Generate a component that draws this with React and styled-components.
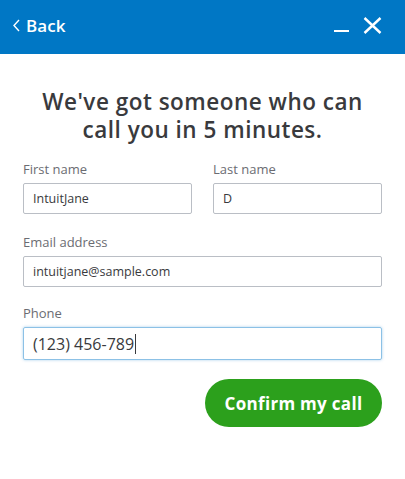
import React from 'react';
import styled, { createGlobalStyle } from 'styled-components';

const GlobalStyle = createGlobalStyle`
    body {
        margin: 0;
        background: #ffffff;
        font-family: 'Open Sans', 'Liberation Sans', sans-serif;
    }
`

const Page = styled.div`
    width: 405px;
    height: 479px;
    display: flex;
    flex-direction: column;
    background: #ffffff;
`

const Header = styled.div`
    height: 54px;
    background: #0077c5;
    display: flex;
    align-items: center;
    justify-content: space-between;
    padding: 0 23px 4px 13px;
    box-sizing: border-box;
    color: #ffffff;
`

const BackButton = styled.div`
    display: flex;
    align-items: center;
    gap: 6px;
    font-size: 17px;
    font-weight: 600;
    letter-spacing: 0.1px;
`

const WindowControls = styled.div`
    display: flex;
    align-items: center;
    gap: 13px;
`

const Body = styled.div`
    padding: 34px 23px 0 23px;
    display: flex;
    flex-direction: column;
`

const Title = styled.h1`
    margin: 0 0 16px 0;
    text-align: center;
    font-size: 22.5px;
    line-height: 28px;
    font-weight: 600;
    letter-spacing: 0.5px;
    color: #393a3d;
`

const Row = styled.div`
    display: grid;
    grid-template-columns: ${({ $cols }) => $cols || '1fr'};
    column-gap: 21px;
    margin-bottom: ${({ $gap }) => $gap || '19px'};
`

const Field = styled.label`
    display: flex;
    flex-direction: column;
`

const Label = styled.span`
    font-size: 13px;
    line-height: 18px;
    color: #6b6c72;
    margin-bottom: 5px;
`

const Input = styled.div`
    height: ${({ $focused }) => ($focused ? '33px' : '31px')};
    box-sizing: border-box;
    border: 1px solid ${({ $focused }) => ($focused ? '#8cc1e6' : '#babec5')};
    box-shadow: ${({ $focused }) => ($focused ? '0 0 3px rgba(0, 119, 197, 0.35)' : 'none')};
    border-radius: 2px;
    padding: 0 9px;
    display: flex;
    align-items: center;
    font-size: ${({ $focused }) => ($focused ? '16px' : '12.5px')};
    color: #393a3d;
`

const Caret = styled.span`
    display: inline-block;
    width: 1px;
    height: 20px;
    background: #393a3d;
    margin-left: 1px;
`

const Actions = styled.div`
    display: flex;
    justify-content: flex-end;
`

const ConfirmButton = styled.button`
    width: 177px;
    height: 48px;
    border: none;
    border-radius: 24px;
    background: #2ca01c;
    color: #ffffff;
    font-family: inherit;
    font-size: 17px;
    font-weight: 700;
    letter-spacing: 0.3px;
    cursor: pointer;
`

function App() {
    return (
        <Page>
            <GlobalStyle />
            <Header>
                <BackButton>
                    <svg width="7" height="13" viewBox="0 0 7 13">
                        <path d="M6 1 L1 6.5 L6 12" stroke="#fff" strokeWidth="1.4" fill="none" />
                    </svg>
                    Back
                </BackButton>
                <WindowControls>
                    <svg width="16" height="16" viewBox="0 0 16 16">
                        <rect x="0" y="13" width="15" height="2" fill="#fff" />
                    </svg>
                    <svg width="19" height="17" viewBox="0 0 19 17">
                        <path d="M1.5 1 L17.5 16 M17.5 1 L1.5 16" stroke="#fff" strokeWidth="2.4" />
                    </svg>
                </WindowControls>
            </Header>
            <Body>
                <Title>We've got someone who can<br />call you in 5 minutes.</Title>
                <Row $cols="1fr 1fr">
                    <Field>
                        <Label>First name</Label>
                        <Input>IntuitJane</Input>
                    </Field>
                    <Field>
                        <Label>Last name</Label>
                        <Input>D</Input>
                    </Field>
                </Row>
                <Row $gap="17px">
                    <Field>
                        <Label>Email address</Label>
                        <Input>intuitjane@sample.com</Input>
                    </Field>
                </Row>
                <Row $gap="19px">
                    <Field>
                        <Label>Phone</Label>
                        <Input $focused>(123) 456-789<Caret /></Input>
                    </Field>
                </Row>
                <Actions>
                    <ConfirmButton>Confirm my call</ConfirmButton>
                </Actions>
            </Body>
        </Page>
    );
}

export default App;
